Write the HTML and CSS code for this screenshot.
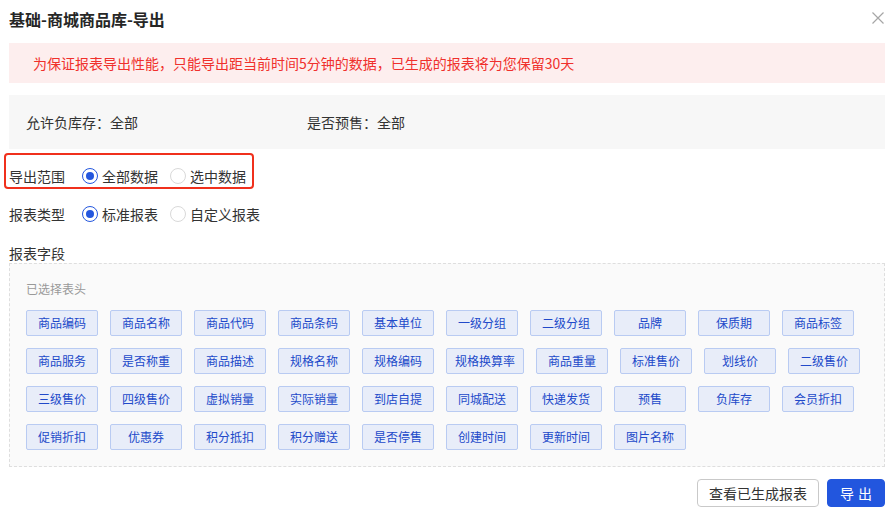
FILE: index.html
```html
<!DOCTYPE html>
<html lang="zh-CN">
<head>
    <meta charset="UTF-8">
    <meta name="viewport" content="width=device-width, initial-scale=1.0">
    <link rel="stylesheet" href="styles.css">
    <title>基础-商城商品库-导出</title>
</head>
<body>

<div class="dialog">
    <div class="dialog-header">
        <div class="dialog-title">基础-商城商品库-导出</div>
        <button class="close-btn" aria-label="关闭">
            <svg width="12" height="12" viewBox="0 0 12 12">
                <path d="M0.5 0.5 L11.5 11.5 M11.5 0.5 L0.5 11.5" stroke="#a6a6a6" stroke-width="1.2" fill="none"/>
            </svg>
        </button>
    </div>

    <div class="alert">为保证报表导出性能，只能导出距当前时间5分钟的数据，已生成的报表将为您保留30天</div>

    <div class="filters">
        <div class="filter-item filter-first">允许负库存：全部</div>
        <div class="filter-item">是否预售：全部</div>
    </div>

    <div class="form-row highlighted">
        <span class="form-label">导出范围</span>
        <label class="radio checked"><span class="radio-dot"></span>全部数据</label>
        <label class="radio"><span class="radio-dot"></span>选中数据</label>
        <div class="mark-box"></div>
    </div>

    <div class="form-row">
        <span class="form-label">报表类型</span>
        <label class="radio checked"><span class="radio-dot"></span>标准报表</label>
        <label class="radio"><span class="radio-dot"></span>自定义报表</label>
    </div>

    <div class="section-label">报表字段</div>
    <div class="fields-box">
        <div class="fields-caption">已选择表头</div>
        <div class="tags" id="tags"></div>
    </div>

    <div class="footer">
        <button class="btn">查看已生成报表</button>
        <button class="btn btn-primary">导出</button>
    </div>
</div>

<script>
    let fields = [
        '商品编码', '商品名称', '商品代码', '商品条码', '基本单位', '一级分组', '二级分组', '品牌', '保质期', '商品标签',
        '商品服务', '是否称重', '商品描述', '规格名称', '规格编码', '规格换算率', '商品重量', '标准售价', '划线价', '二级售价',
        '三级售价', '四级售价', '虚拟销量', '实际销量', '到店自提', '同城配送', '快递发货', '预售', '负库存', '会员折扣',
        '促销折扣', '优惠券', '积分抵扣', '积分赠送', '是否停售', '创建时间', '更新时间', '图片名称'
    ];
    let tagsElement = document.getElementById('tags');

    fields.forEach(function (name) {
        let tag = document.createElement('span');
        tag.className = 'tag';
        tag.innerText = name;
        tagsElement.appendChild(tag);
    });
</script>

</body>
</html>
```

FILE: styles.css
```css
body {
    margin: 0;
    font-family: "Noto Sans CJK SC", "Noto Sans", sans-serif;
    color: #333;
    background: #fff;
}

.dialog {
    padding: 0 6px 0 9px;
}

.dialog-header {
    display: flex;
    align-items: center;
    justify-content: space-between;
    height: 38px;
}

.dialog-title {
    font-size: 16px;
    font-weight: 600;
    color: #262626;
    line-height: 22px;
}

.close-btn {
    border: none;
    background: none;
    padding: 0;
    width: 12px;
    height: 12px;
    margin-right: 1px;
    margin-top: -2px;
    display: flex;
    cursor: pointer;
}

.alert {
    margin-top: 5px;
    height: 40px;
    padding-left: 24px;
    display: flex;
    align-items: center;
    background-color: #fdeeee;
    color: #f0302c;
    font-size: 14px;
}

.filters {
    margin-top: 12px;
    height: 54px;
    padding-left: 17px;
    display: flex;
    align-items: center;
    background-color: #f7f7f7;
    font-size: 14px;
    color: #333;
}

.filter-first {
    width: 281px;
}

.form-row {
    position: relative;
    display: flex;
    align-items: center;
    height: 37px;
    font-size: 14px;
}

.highlighted {
    margin-top: 7px;
    height: 39px;
}

.form-label {
    width: 73px;
}

.radio {
    display: flex;
    align-items: center;
    margin-right: 12px;
    cursor: pointer;
}

.radio-dot {
    box-sizing: border-box;
    width: 16px;
    height: 16px;
    margin-right: 4px;
    border: 1px solid #d9d9d9;
    border-radius: 50%;
    background: #fff;
    position: relative;
}

.radio.checked .radio-dot {
    border-color: #2457de;
}

.radio.checked .radio-dot::after {
    content: "";
    position: absolute;
    left: 3px;
    top: 3px;
    width: 8px;
    height: 8px;
    border-radius: 50%;
    background: #2457de;
}

.mark-box {
    position: absolute;
    left: -5px;
    top: -3px;
    width: 250px;
    height: 36px;
    box-sizing: border-box;
    border: 2px solid #f0301c;
    border-radius: 4px;
    pointer-events: none;
}

.section-label {
    margin-top: 11px;
    font-size: 14px;
    line-height: 20px;
}

.fields-box {
    border: 1px dashed #dedede;
    background-color: #fafafa;
    padding: 15px 16px 16px;
}

.fields-caption {
    font-size: 12px;
    line-height: 20px;
    color: #999;
}

.tags {
    margin-top: 11px;
    display: flex;
    flex-wrap: wrap;
    gap: 12px;
}

.tag {
    box-sizing: border-box;
    min-width: 72px;
    height: 26px;
    padding: 0 8px;
    line-height: 24px;
    text-align: center;
    font-size: 12px;
    color: #2149c9;
    background-color: #e8edf9;
    border: 1px solid #b9cbf2;
    border-radius: 2px;
}

.footer {
    display: flex;
    justify-content: flex-end;
    gap: 8px;
    margin-top: 12px;
}

.btn {
    box-sizing: border-box;
    height: 28px;
    padding: 0 11px;
    font-family: inherit;
    font-size: 14px;
    color: #333;
    background: #fff;
    border: 1px solid #c9c9c9;
    border-radius: 4px;
    cursor: pointer;
}

.btn-primary {
    padding: 0 8px 0 12px;
    letter-spacing: 4px;
    color: #fff;
    background-color: #2256de;
    border-color: #2256de;
}
```
